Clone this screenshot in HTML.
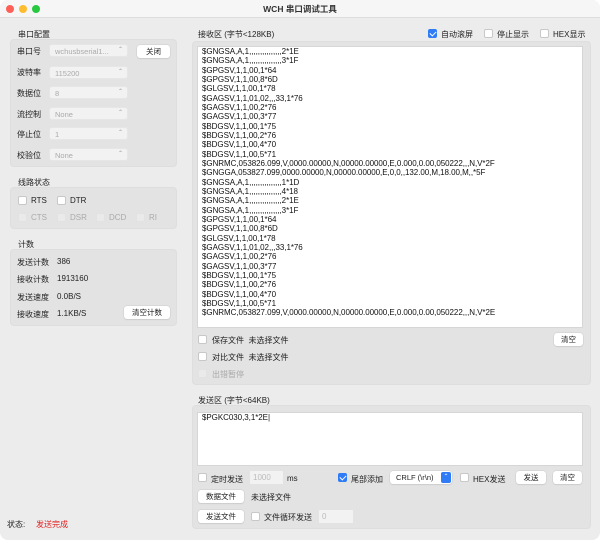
<!DOCTYPE html>
<html><head><meta charset="utf-8"><style>
*{box-sizing:border-box;margin:0;padding:0}
body{width:600px;height:540px;background:#fff;font-family:"Liberation Sans","Noto Sans CJK SC",sans-serif;font-size:8px;color:#222;position:relative;overflow:hidden}
.win{position:absolute;left:0;top:0;width:600px;height:540px;background:#ececec;border-radius:8px;overflow:hidden}
.title{position:absolute;left:0;top:0;width:600px;height:18px;background:#f6f6f6;border-bottom:1px solid #ddd;text-align:center;line-height:18px;font-size:8.5px;font-weight:bold;color:#333}
.dot{position:absolute;top:5px;width:8px;height:8px;border-radius:50%}
.a{position:absolute;white-space:nowrap}
.box{position:absolute;background:#e3e3e3;border-radius:4px;border:1px solid #dedede}
.sel{position:absolute;background:#f2f2f2;border-radius:3px;height:13px;color:#aaa;padding-left:5px;line-height:13px;font-size:7.5px;border:1px solid #e6e6e6}
.sel:after{content:"\2303";position:absolute;right:4px;top:-1px;font-size:6px;color:#999}
.btn{position:absolute;background:#fff;border-radius:3px;height:13px;line-height:13px;text-align:center;font-size:7.5px;box-shadow:0 0 0 .5px #ccc,0 1px 1px #ccc}
.cb{position:absolute;width:9px;height:9px;background:#fff;border:1px solid #c8c8c8;border-radius:2px}
.cb.dis{background:#eaeaea;border-color:#e2e2e2}
.cb.on{background:#2f7cf6;border-color:#2f7cf6}
.cb.on:after{content:"";position:absolute;left:2px;top:0px;width:3px;height:5px;border:solid #fff;border-width:0 1.5px 1.5px 0;transform:rotate(45deg)}
.ta{position:absolute;background:#fff;border:1px solid #d6d6d6}
.lines{position:absolute;left:4px;top:0px;font-size:8px;line-height:9.33px;letter-spacing:-.05px;color:#111}
.g{color:#aaa}
</style></head><body>
<div class="win">
<div class="title">WCH 串口调试工具</div>
<div class="dot" style="left:6px;background:#fe5f57"></div>
<div class="dot" style="left:19px;background:#febc2e"></div>
<div class="dot" style="left:32px;background:#28c840"></div>

<div class="a" style="left:18px;top:29px">串口配置</div>
<div class="box" style="left:10px;top:39px;width:167px;height:128px"></div>
<div class="a" style="left:17px;top:46px">串口号</div>
<div class="sel" style="left:49px;top:44px;width:79px">wchusbserial1...</div>
<div class="btn" style="left:137px;top:45px;width:33px">关闭</div>
<div class="a" style="left:17px;top:67px">波特率</div>
<div class="sel" style="left:49px;top:66px;width:79px">115200</div>
<div class="a" style="left:17px;top:88px">数据位</div>
<div class="sel" style="left:49px;top:86px;width:79px">8</div>
<div class="a" style="left:17px;top:109px">流控制</div>
<div class="sel" style="left:49px;top:107px;width:79px">None</div>
<div class="a" style="left:17px;top:129px">停止位</div>
<div class="sel" style="left:49px;top:127px;width:79px">1</div>
<div class="a" style="left:17px;top:150px">校验位</div>
<div class="sel" style="left:49px;top:148px;width:79px">None</div>

<div class="a" style="left:18px;top:177px">线路状态</div>
<div class="box" style="left:10px;top:187px;width:167px;height:42px"></div>
<div class="cb" style="left:18px;top:196px"></div><div class="a" style="left:31px;top:196px">RTS</div>
<div class="cb" style="left:57px;top:196px"></div><div class="a" style="left:70px;top:196px">DTR</div>
<div class="cb dis" style="left:18px;top:213px"></div><div class="a g" style="left:31px;top:213px">CTS</div>
<div class="cb dis" style="left:57px;top:213px"></div><div class="a g" style="left:70px;top:213px">DSR</div>
<div class="cb dis" style="left:96px;top:213px"></div><div class="a g" style="left:109px;top:213px">DCD</div>
<div class="cb dis" style="left:136px;top:213px"></div><div class="a g" style="left:149px;top:213px">RI</div>

<div class="a" style="left:18px;top:239px">计数</div>
<div class="box" style="left:10px;top:249px;width:167px;height:77px"></div>
<div class="a" style="left:17px;top:257px">发送计数</div><div class="a" style="left:57px;top:257px">386</div>
<div class="a" style="left:17px;top:274px">接收计数</div><div class="a" style="left:57px;top:274px">1913160</div>
<div class="a" style="left:17px;top:292px">发送速度</div><div class="a" style="left:57px;top:292px">0.0B/S</div>
<div class="a" style="left:17px;top:309px">接收速度</div><div class="a" style="left:57px;top:309px">1.1KB/S</div>
<div class="btn" style="left:124px;top:306px;width:46px">清空计数</div>

<div class="a" style="left:7px;top:519px">状态:</div>
<div class="a" style="left:36px;top:519px;color:#e02020">发送完成</div>

<div class="a" style="left:198px;top:29px">接收区 (字节&lt;128KB)</div>
<div class="cb on" style="left:428px;top:29px"></div><div class="a" style="left:441px;top:29px">自动滚屏</div>
<div class="cb" style="left:484px;top:29px"></div><div class="a" style="left:497px;top:29px">停止显示</div>
<div class="cb" style="left:540px;top:29px"></div><div class="a" style="left:553px;top:29px">HEX显示</div>
<div class="box" style="left:192px;top:41px;width:399px;height:344px"></div>
<div class="ta" style="left:197px;top:46px;width:386px;height:282px"><div class="lines">$GNGSA,A,1,,,,,,,,,,,,,,,2*1E<br>$GNGSA,A,1,,,,,,,,,,,,,,,3*1F<br>$GPGSV,1,1,00,1*64<br>$GPGSV,1,1,00,8*6D<br>$GLGSV,1,1,00,1*78<br>$GAGSV,1,1,01,02,,,33,1*76<br>$GAGSV,1,1,00,2*76<br>$GAGSV,1,1,00,3*77<br>$BDGSV,1,1,00,1*75<br>$BDGSV,1,1,00,2*76<br>$BDGSV,1,1,00,4*70<br>$BDGSV,1,1,00,5*71<br>$GNRMC,053826.099,V,0000.00000,N,00000.00000,E,0.000,0.00,050222,,,N,V*2F<br>$GNGGA,053827.099,0000.00000,N,00000.00000,E,0,0,,132.00,M,18.00,M,,*5F<br>$GNGSA,A,1,,,,,,,,,,,,,,,1*1D<br>$GNGSA,A,1,,,,,,,,,,,,,,,4*18<br>$GNGSA,A,1,,,,,,,,,,,,,,,2*1E<br>$GNGSA,A,1,,,,,,,,,,,,,,,3*1F<br>$GPGSV,1,1,00,1*64<br>$GPGSV,1,1,00,8*6D<br>$GLGSV,1,1,00,1*78<br>$GAGSV,1,1,01,02,,,33,1*76<br>$GAGSV,1,1,00,2*76<br>$GAGSV,1,1,00,3*77<br>$BDGSV,1,1,00,1*75<br>$BDGSV,1,1,00,2*76<br>$BDGSV,1,1,00,4*70<br>$BDGSV,1,1,00,5*71<br>$GNRMC,053827.099,V,0000.00000,N,00000.00000,E,0.000,0.00,050222,,,N,V*2E</div></div>
<div class="cb" style="left:198px;top:335px"></div><div class="a" style="left:212px;top:335px">保存文件&nbsp;&nbsp;未选择文件</div>
<div class="btn" style="left:554px;top:333px;width:29px">清空</div>
<div class="cb" style="left:198px;top:352px"></div><div class="a" style="left:212px;top:352px">对比文件&nbsp;&nbsp;未选择文件</div>
<div class="cb dis" style="left:198px;top:369px"></div><div class="a g" style="left:212px;top:369px">出错暂停</div>

<div class="a" style="left:198px;top:395px">发送区 (字节&lt;64KB)</div>
<div class="box" style="left:192px;top:405px;width:399px;height:124px"></div>
<div class="ta" style="left:197px;top:412px;width:386px;height:54px"><div class="lines" style="top:0">$PGKC030,3,1*2E|</div></div>
<div class="cb" style="left:198px;top:473px"></div><div class="a" style="left:211px;top:474px">定时发送</div>
<div class="a" style="left:250px;top:471px;width:33px;height:13px;background:#f2f2f2;color:#bbb;line-height:13px;padding-left:3px">1000</div>
<div class="a" style="left:287px;top:474px">ms</div>
<div class="cb on" style="left:338px;top:473px"></div><div class="a" style="left:351px;top:474px">尾部添加</div>
<div class="btn" style="left:390px;top:471px;width:62px;text-align:left;padding-left:6px">CRLF (\r\n)<span style="position:absolute;right:1px;top:1px;width:10px;height:11px;background:#2f7cf6;border-radius:2px;color:#fff;font-size:6px;line-height:11px;text-align:center">⌃</span></div>
<div class="cb" style="left:460px;top:473px"></div><div class="a" style="left:473px;top:474px">HEX发送</div>
<div class="btn" style="left:516px;top:471px;width:30px">发送</div>
<div class="btn" style="left:553px;top:471px;width:29px">清空</div>
<div class="btn" style="left:198px;top:490px;width:46px">数据文件</div>
<div class="a" style="left:251px;top:492px">未选择文件</div>
<div class="btn" style="left:198px;top:510px;width:46px">发送文件</div>
<div class="cb" style="left:251px;top:512px"></div><div class="a" style="left:264px;top:512px">文件循环发送</div>
<div class="a" style="left:319px;top:510px;width:34px;height:13px;background:#f2f2f2;color:#bbb;line-height:13px;padding-left:3px">0</div>
</div>
</body></html>
